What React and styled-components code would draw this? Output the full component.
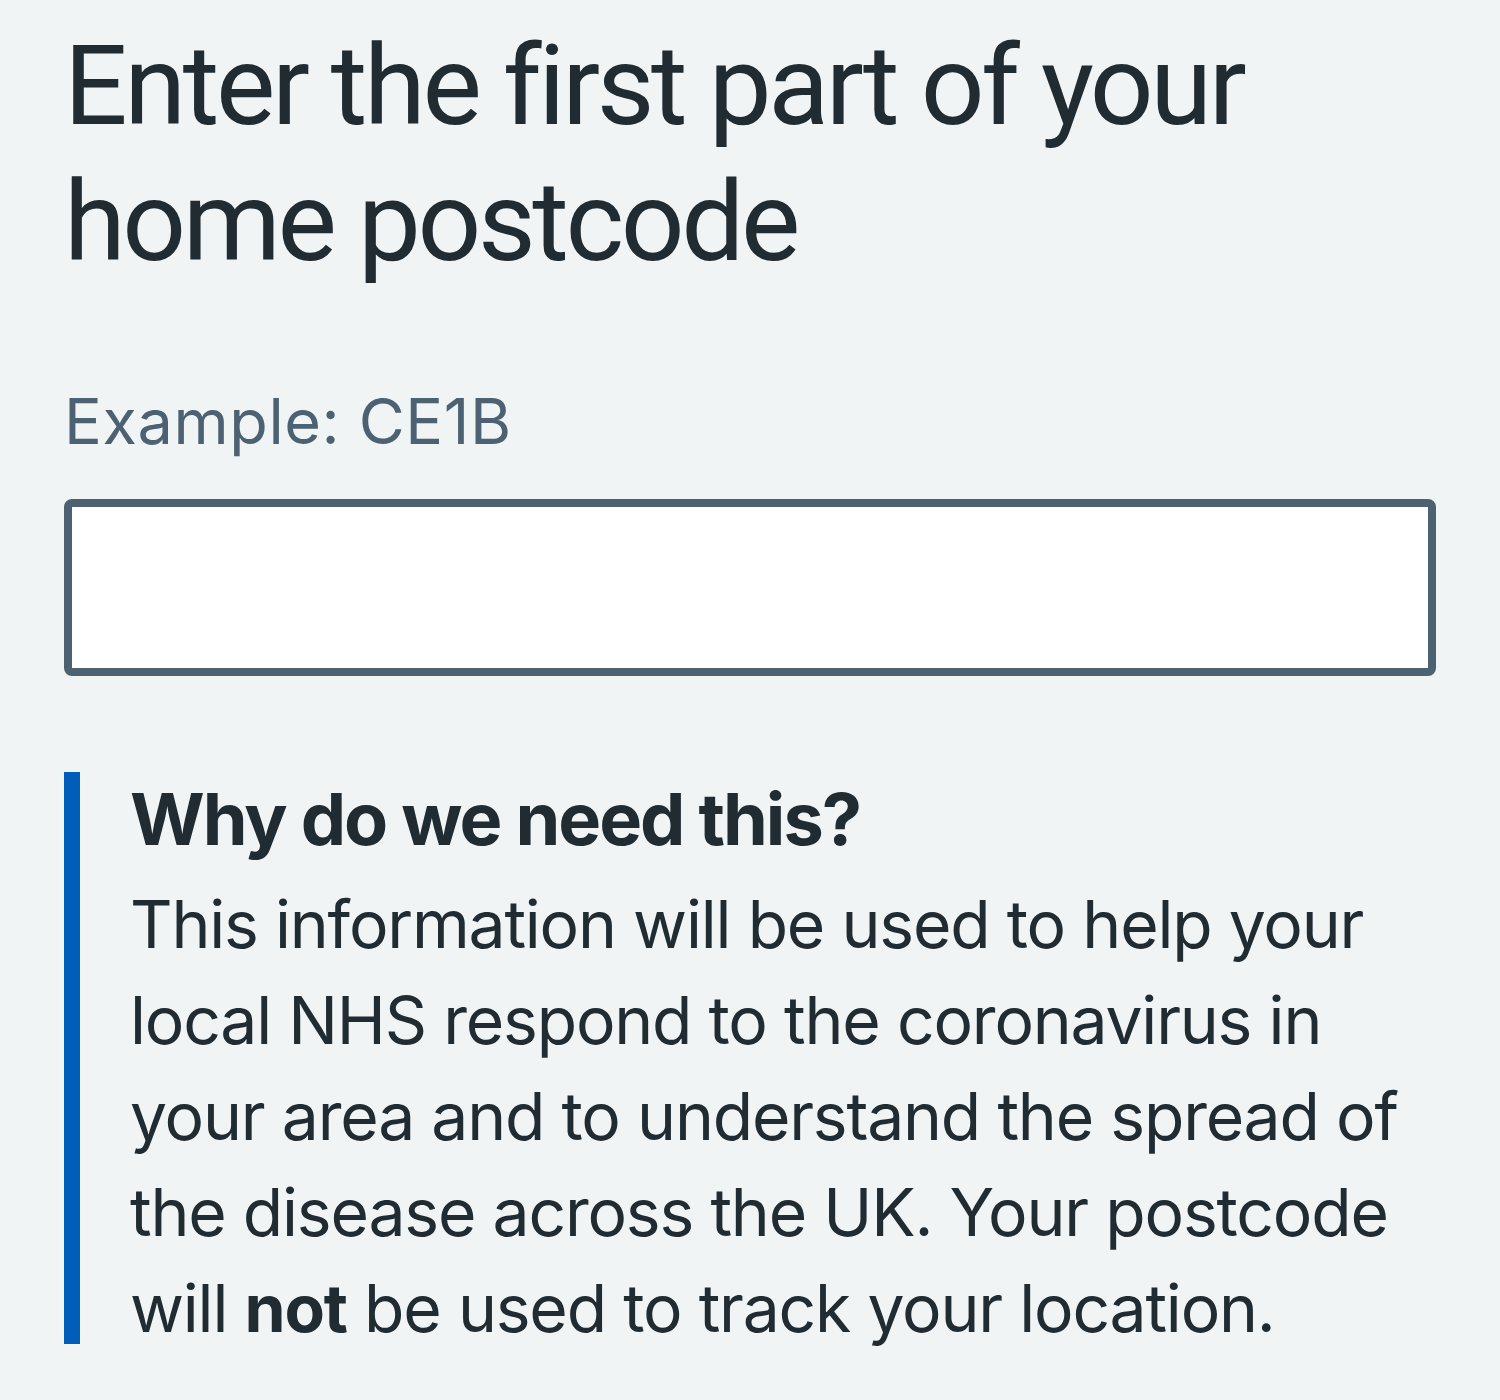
import styled, { createGlobalStyle } from 'styled-components';

const GlobalStyle = createGlobalStyle`
  html, body {
    margin: 0;
    padding: 0;
    background: #f0f4f5;
  }
  body {
    font-family: Inter, "Liberation Sans", sans-serif;
    color: #212b32;
  }
`

const Page = styled.main`
  min-height: 1400px;
  padding: 18px 64px 0 64px;
  box-sizing: border-box;
  background: #f0f4f5;
`

const Title = styled.h1`
  margin: 0;
  font-family: Roboto, "Liberation Sans", sans-serif;
  font-size: 112px;
  line-height: 136px;
  font-weight: 400;
  letter-spacing: -3.4px;
  color: #212b32;
`

const Hint = styled.label`
  display: block;
  margin-top: 91px;
  font-size: 63px;
  line-height: 80px;
  letter-spacing: 0.6px;
  color: #4c6272;
`

const PostcodeInput = styled.input`
  display: block;
  box-sizing: border-box;
  width: 100%;
  height: 177px;
  margin-top: 38px;
  border: 8px solid #4c6272;
  border-radius: 8px;
  background: #ffffff;
  outline: none;
  font-family: inherit;
  font-size: 64px;
  padding: 0 24px;
`

const Inset = styled.section`
  display: flow-root;
  margin-top: 96px;
  padding: 3px 0 0 50px;
  border-left: 16px solid #005eb8;
`

const InsetHeading = styled.h2`
  margin: 0;
  font-size: 72px;
  line-height: 88px;
  font-weight: 700;
  letter-spacing: -2px;
  color: #212b32;
`

const InsetText = styled.p`
  margin: 13px 0 -12px 0;
  font-size: 66px;
  line-height: 96px;
  letter-spacing: -1.2px;
  color: #212b32;
`

export default function App() {
  return (
    <>
      <GlobalStyle />
      <Page>
        <Title>Enter the first part of your home postcode</Title>
        <Hint htmlFor="postcode">Example: CE1B</Hint>
        <PostcodeInput id="postcode" type="text" />
        <Inset>
          <InsetHeading>Why do we need this?</InsetHeading>
          <InsetText>
            This information will be used to help your local NHS respond to the
            coronavirus in your area and to understand the spread of the disease
            across the UK. Your postcode will <strong>not</strong> be used to
            track your location.
          </InsetText>
        </Inset>
      </Page>
    </>
  );
}
